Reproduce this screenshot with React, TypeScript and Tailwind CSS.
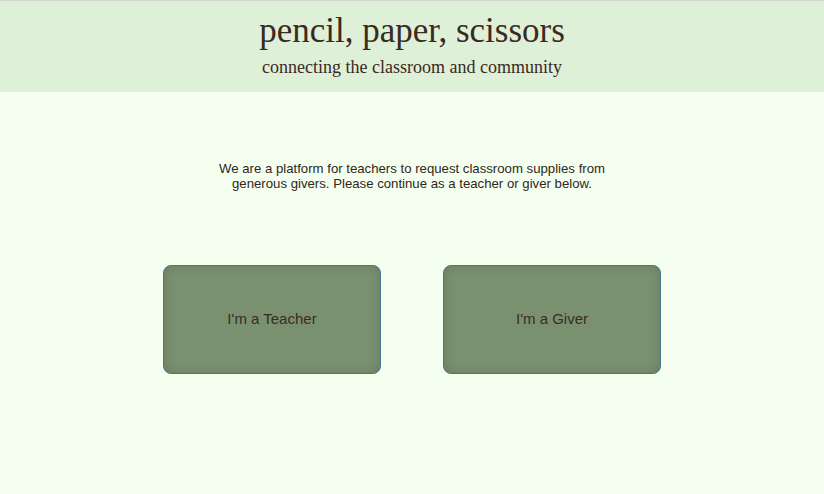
export default function App() {
  return (
    <div className="min-h-[494px] bg-[#f4fff0] font-['Liberation_Sans',Arial,sans-serif] text-[#2f2620]">
      <header className="border-t border-[#d3d6cf] bg-[#dff0d8] pt-[10px] pb-[14px] text-center font-['Liberation_Serif','Times_New_Roman',serif] text-[#3a2a1f]">
        <h1 className="text-[35px] leading-[40px]">pencil, paper, scissors</h1>
        <p className="mt-[5px] text-[18px] leading-[22px]">connecting the classroom and community</p>
      </header>

      <main className="flex flex-col items-center">
        <p className="mt-[69px] w-[400px] text-center text-[13.2px] leading-[15px]">
          We are a platform for teachers to request classroom supplies from generous givers. Please continue as a teacher or giver below.
        </p>

        <div className="mt-[74px] flex gap-[62px]">
          <button className="flex h-[109px] w-[218px] items-center justify-center rounded-[8px] border border-[#4c7292] bg-[#7a9170] text-[15px] text-[#3a2b22] shadow-[inset_0_0_12px_rgba(60,80,50,0.3)]">
            I'm a Teacher
          </button>
          <button className="flex h-[109px] w-[218px] items-center justify-center rounded-[8px] border border-[#4c7292] bg-[#7a9170] text-[15px] text-[#3a2b22] shadow-[inset_0_0_12px_rgba(60,80,50,0.3)]">
            I'm a Giver
          </button>
        </div>
      </main>
    </div>
  );
}
